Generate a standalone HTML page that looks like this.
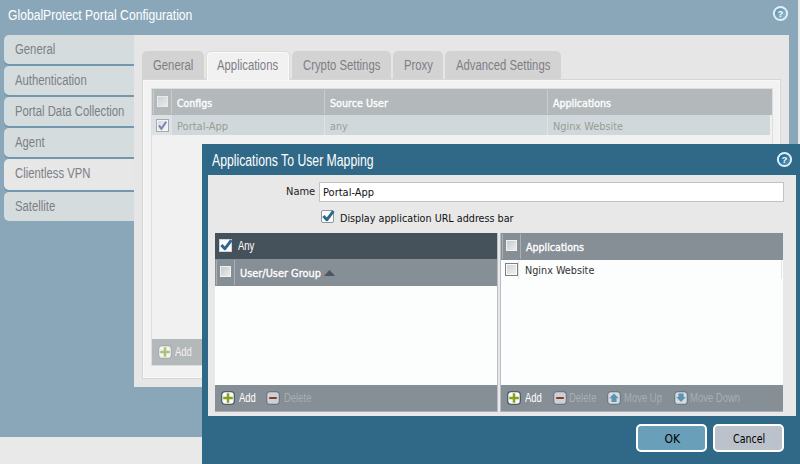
<!DOCTYPE html>
<html>
<head>
<meta charset="utf-8">
<title>GlobalProtect Portal Configuration</title>
<style>
html,body{margin:0;padding:0;}
body{width:800px;height:464px;overflow:hidden;background:#e9e9e9;position:relative;font-family:"Liberation Sans",sans-serif;}
.abs{position:absolute;}
.cn{position:absolute;white-space:nowrap;font-family:"Liberation Sans",sans-serif;font-size:14px;line-height:16px;transform:scaleX(.808);transform-origin:0 50%;}
.th{position:absolute;white-space:nowrap;font-family:"DejaVu Sans Condensed","DejaVu Sans","Liberation Sans",sans-serif;font-size:11px;line-height:14px;transform-origin:0 50%;}
#back{left:0;top:0;width:798px;height:437px;background:#8aa7ba;}
.stab{position:absolute;left:4px;width:130px;height:29px;background:#d5dcdd;border-radius:5px 0 0 5px;box-shadow:0 2px 0 #7397af;}
.stab .cn{left:11px;top:6px;color:#7c8085;}
.stab.act{background:#e7e7e7;height:31px;}
#main{left:134px;top:35px;width:655px;height:352px;background:#e6e6e6;}
.itab{position:absolute;top:51px;height:28px;background:#d3d3d3;border-radius:5px 5px 0 0;}
.itab .cn{left:11px;top:6px;color:#7c8085;}
.itab.act{background:#f1f1f1;border:1px solid #dcdcdc;border-bottom:none;height:29px;top:51px;box-sizing:border-box;box-shadow:inset 1px 1px 0 #fafafa,inset -1px 0 0 #fafafa;}
#ipanel{left:142px;top:79px;width:639px;height:300px;background:#f2f2f2;border:1px solid #d6d6d6;box-shadow:inset 0 0 0 1px #f8f8f8;box-sizing:border-box;}
#dlg{left:202px;top:144px;width:600px;height:330px;background:#306887;}
#dlgc{left:208px;top:175px;width:588px;height:241px;background:#e8e8e8;}
.cb{position:absolute;box-sizing:border-box;background:linear-gradient(135deg,#d8dadb 0%,#f4f4f4 100%);border:1px solid #8e9499;}
.btn{position:absolute;box-sizing:border-box;height:28px;width:71px;border:2px solid #fff;border-radius:5px;}
</style>
</head>
<body>
<div id="back" class="abs"></div>
<div class="cn" style="left:8px;top:7px;color:#fff;font-size:15px;transform:scale(.81,1.03)">GlobalProtect Portal Configuration</div>

<!-- help icon (back) -->
<svg class="abs" style="left:772px;top:5px" width="17" height="17" viewBox="0 0 17 17">
  <defs><linearGradient id="hg1" x1="0" y1="0" x2="1" y2="1"><stop offset="0" stop-color="#4f8bab"/><stop offset="1" stop-color="#9cc0d2"/></linearGradient></defs>
  <circle cx="8.5" cy="8.5" r="6.6" fill="url(#hg1)" stroke="#e6eef3" stroke-width="2"/>
  <text x="8.5" y="11.9" text-anchor="middle" font-family="Liberation Sans, sans-serif" font-weight="bold" font-size="9.5" fill="#fff">?</text>
</svg>

<!-- side tabs -->
<div class="stab" style="top:35px"><div class="cn">General</div></div>
<div class="stab" style="top:66px"><div class="cn">Authentication</div></div>
<div class="stab" style="top:97px"><div class="cn">Portal Data Collection</div></div>
<div class="stab" style="top:128px"><div class="cn">Agent</div></div>
<div class="stab act" style="top:159px"><div class="cn">Clientless VPN</div></div>
<div class="stab" style="top:192px;box-shadow:none"><div class="cn">Satellite</div></div>

<div id="main" class="abs"></div>

<!-- inner tabs -->
<div class="itab" style="left:142px;width:62px"><div class="cn">General</div></div>
<div class="itab" style="left:292px;width:99px"><div class="cn" style="left:10.5px">Crypto Settings</div></div>
<div class="itab" style="left:393px;width:50px"><div class="cn" style="left:10.7px">Proxy</div></div>
<div class="itab" style="left:445px;width:116px"><div class="cn" style="left:10.7px;transform:scaleX(.808)">Advanced Settings</div></div>
<div id="ipanel" class="abs"></div>
<div class="itab act" style="left:206px;width:84px"><div class="cn" style="top:5px;left:10px;transform:scaleX(.81)">Applications</div></div>

<!-- back grid -->
<div class="abs" style="left:151px;top:88px;width:622px;height:278px;box-sizing:border-box;border:1px solid #dcdee0;background:#f1f1f1"></div>
<div class="abs" style="left:152px;top:89px;width:620px;height:26px;background:#b3b9bb;"></div>
<div class="abs" style="left:152px;top:115px;width:618px;height:20px;background:#d0d8db;"></div>
<div class="abs" style="left:152px;top:135px;width:620px;height:230px;background:#f1f1f1;"></div>
<div class="abs" style="left:152px;top:339px;width:60px;height:26px;background:#b3b9bb;"></div>
<div class="abs" style="left:153px;top:90px;width:1px;height:24px;background:#c9cdce;"></div>
<div class="abs" style="left:171px;top:90px;width:1px;height:24px;background:#c9cdce;"></div>
<div class="abs" style="left:324px;top:90px;width:1px;height:24px;background:#c9cdce;"></div>
<div class="abs" style="left:547px;top:90px;width:1px;height:24px;background:#c9cdce;"></div>
<div class="abs" style="left:171px;top:115px;width:1px;height:20px;background:#dde3e5;"></div>
<div class="abs" style="left:324px;top:115px;width:1px;height:20px;background:#dde3e5;"></div>
<div class="abs" style="left:547px;top:115px;width:1px;height:20px;background:#dde3e5;"></div>
<div class="cb" style="left:157px;top:96px;width:11px;height:11px;border-color:#e9ebeb;background:linear-gradient(135deg,#cfd2d3,#e8e9e9)"></div>
<div class="th" style="left:177px;top:97px;color:#fff;-webkit-text-stroke:.35px #fff;transform:scaleX(.95)">Configs</div>
<div class="th" style="left:330px;top:97px;color:#fff;-webkit-text-stroke:.35px #fff;transform:scaleX(.97)">Source User</div>
<div class="th" style="left:553px;top:97px;color:#fff;-webkit-text-stroke:.35px #fff;transform:scaleX(.96)">Applications</div>
<div class="abs" style="left:152px;top:115px;width:19px;height:20px;background:#dce2e4;"></div>
<div class="cb" style="left:156px;top:119px;width:13px;height:13px;border-color:#a3a9ad;background:linear-gradient(135deg,#d4d8e0,#f6f7f8);box-shadow:inset 0 0 0 1px #f3f5f6"></div>
<svg class="abs" style="left:156px;top:119px" width="13" height="13" viewBox="0 0 13 13"><path d="M3 6.4 L5.4 9.8 L10.2 2.8" fill="none" stroke="#7a83b4" stroke-width="2"/></svg>
<div class="th" style="left:177px;top:120px;color:#999d93;">Portal-App</div>
<div class="th" style="left:330px;top:120px;color:#999d93;transform:scaleX(.97)">any</div>
<div class="th" style="left:553px;top:120px;color:#999d93;transform:scaleX(.985)">Nginx Website</div>
<!-- back add -->
<svg class="abs" style="left:158px;top:345px" width="14" height="14" viewBox="0 0 14 14"><rect x="0.65" y="0.65" width="12.7" height="12.7" rx="3.4" fill="#f3f4f1" stroke="#a4acb0" stroke-width="1.2"/><path d="M7 2.2V11.8M2.2 7H11.8" stroke="#adc275" stroke-width="2.5"/></svg>
<div class="cn" style="left:175px;top:344px;color:#eef0f0;font-size:12px;transform:scaleX(.79)">Add</div>

<!-- front dialog -->
<div id="dlg" class="abs"></div>
<div class="cn" style="left:212px;top:153px;color:#fff;font-size:15px;transform:scale(.815,1.04)">Applications To User Mapping</div>
<svg class="abs" style="left:776px;top:151px" width="17" height="17" viewBox="0 0 17 17">
  <defs><linearGradient id="hg2" x1="0" y1="0" x2="1" y2="1"><stop offset="0" stop-color="#0d5c8c"/><stop offset="1" stop-color="#5b9bc0"/></linearGradient></defs>
  <circle cx="8.5" cy="8.5" r="6.6" fill="url(#hg2)" stroke="#e3edf3" stroke-width="2"/>
  <text x="8.5" y="11.9" text-anchor="middle" font-family="Liberation Sans, sans-serif" font-weight="bold" font-size="9.5" fill="#fff">?</text>
</svg>
<div id="dlgc" class="abs"></div>
<div class="th" style="left:286px;top:185px;color:#222;">Name</div>
<div class="abs" style="left:319px;top:181.5px;width:465px;height:20px;box-sizing:border-box;background:#fff;border:1px solid #c3c3c3;"></div>
<div class="th" style="left:323px;top:186px;color:#111;">Portal-App</div>
<div class="cb" style="left:320.5px;top:209.5px;width:13.5px;height:13px;background:#fff;border-color:#8f979d;border-radius:2px"></div>
<svg class="abs" style="left:320.5px;top:208px" width="15" height="15" viewBox="0 0 15 15"><path d="M2.4 8 L5.8 11.8 L12.4 3.2" fill="none" stroke="#2c6a8c" stroke-width="2.9" stroke-linejoin="round"/></svg>
<div class="th" style="left:339.5px;top:212px;color:#111;transform:scaleX(.972)">Display application URL address bar</div>

<!-- left grid -->
<div class="abs" style="left:215px;top:233px;width:282px;height:26px;background:#45525c;"></div>
<div class="abs" style="left:215px;top:259px;width:282px;height:27px;background:#868e96;"></div>
<div class="abs" style="left:215px;top:286px;width:282px;height:99px;background:#fcfdfd;"></div>
<div class="abs" style="left:215px;top:385px;width:282px;height:26px;background:#868e96;border-bottom:1px solid #a9aeb4"></div>
<div class="abs" style="left:216px;top:260px;width:1px;height:25px;background:#a9afb5;"></div>
<div class="abs" style="left:234px;top:260px;width:1px;height:25px;background:#a9afb5;"></div>
<div class="cb" style="left:219px;top:239px;width:13px;height:13px;background:#fff;border-color:#cfd4d8"></div>
<svg class="abs" style="left:219px;top:237px" width="15" height="15" viewBox="0 0 15 15"><path d="M2.4 8 L5.8 11.8 L12.4 3.2" fill="none" stroke="#2c6a8c" stroke-width="2.9" stroke-linejoin="round"/></svg>
<div class="cn" style="left:238px;top:238px;color:#fff;font-size:12px;transform:scaleX(.79)">Any</div>
<div class="cb" style="left:220px;top:266px;width:11px;height:11px;border-color:#f0f1f2;background:linear-gradient(135deg,#c6cace,#ececec)"></div>
<div class="th" style="left:240px;top:267px;color:#fff;-webkit-text-stroke:.35px #fff;transform:scaleX(.99)">User/User Group</div>
<svg class="abs" style="left:324px;top:270px" width="11" height="6" viewBox="0 0 11 6"><path d="M0 6 L5.5 0 L11 6Z" fill="#4a5660"/></svg>
<!-- left toolbar -->
<svg class="abs" style="left:221px;top:391px" width="14" height="14" viewBox="0 0 14 14"><rect x="0.65" y="0.65" width="12.7" height="12.7" rx="3.4" fill="#fdfdfb" stroke="#4f5f6a" stroke-width="1.3"/><path d="M7 2.2V11.8M2.2 7H11.8" stroke="#86a11f" stroke-width="2.5"/></svg>
<div class="cn" style="left:239px;top:390px;color:#fff;font-size:12px;transform:scaleX(.79)">Add</div>
<svg class="abs" style="left:266px;top:391px" width="14" height="14" viewBox="0 0 14 14"><rect x="0.65" y="0.65" width="12.7" height="12.7" rx="3.4" fill="#cdd1d5" stroke="#6c7780" stroke-width="1.2"/><path d="M3.2 7H10.8" stroke="#8b3d2b" stroke-width="2"/></svg>
<div class="cn" style="left:283.5px;top:390px;color:#a8aeb4;font-size:12px;transform:scaleX(.79)">Delete</div>

<!-- splitter -->
<div class="abs" style="left:497px;top:233px;width:1px;height:179px;background:#b9bdc3;"></div>
<div class="abs" style="left:500px;top:233px;width:1px;height:179px;background:#b9bdc3;"></div>

<!-- right grid -->
<div class="abs" style="left:501px;top:233px;width:282px;height:27px;background:#868e96;"></div>
<div class="abs" style="left:501px;top:260px;width:282px;height:125px;background:#fcfdfd;"></div>
<div class="abs" style="left:501px;top:385px;width:282px;height:26px;background:#868e96;border-bottom:1px solid #a9aeb4"></div>
<div class="abs" style="left:502px;top:234px;width:1px;height:25px;background:#a9afb5;"></div>
<div class="abs" style="left:520px;top:234px;width:1px;height:25px;background:#a9afb5;"></div>
<div class="abs" style="left:518px;top:260px;width:1px;height:19px;background:#e3e6e8;"></div>
<div class="abs" style="left:781px;top:260px;width:1px;height:19px;background:#e3e6e8;"></div>
<div class="cb" style="left:506px;top:240px;width:11px;height:11px;border-color:#f0f1f2;background:linear-gradient(135deg,#c6cace,#ececec)"></div>
<div class="th" style="left:526px;top:241px;color:#fff;-webkit-text-stroke:.35px #fff;transform:scaleX(.96)">Applications</div>
<div class="cb" style="left:505px;top:263px;width:13px;height:13px;border-color:#7d8084;background:linear-gradient(135deg,#cfd1d3,#f4f4f4);box-shadow:inset 0 0 0 1px #fbfbfb"></div>
<div class="th" style="left:525px;top:264px;color:#333;transform:scaleX(.975)">Nginx Website</div>
<!-- right toolbar -->
<svg class="abs" style="left:506.5px;top:391px" width="14" height="14" viewBox="0 0 14 14"><rect x="0.65" y="0.65" width="12.7" height="12.7" rx="3.4" fill="#fdfdfb" stroke="#4f5f6a" stroke-width="1.3"/><path d="M7 2.2V11.8M2.2 7H11.8" stroke="#86a11f" stroke-width="2.5"/></svg>
<div class="cn" style="left:525px;top:390px;color:#fff;font-size:12px;transform:scaleX(.79)">Add</div>
<svg class="abs" style="left:552.5px;top:391px" width="14" height="14" viewBox="0 0 14 14"><rect x="0.65" y="0.65" width="12.7" height="12.7" rx="3.4" fill="#cdd1d5" stroke="#6c7780" stroke-width="1.2"/><path d="M3.2 7H10.8" stroke="#8b3d2b" stroke-width="2"/></svg>
<div class="cn" style="left:569px;top:390px;color:#a8aeb4;font-size:12px;transform:scaleX(.79)">Delete</div>
<svg class="abs" style="left:607.25px;top:391px" width="14" height="14" viewBox="0 0 14 14"><rect x="0.65" y="0.65" width="12.7" height="12.7" rx="3.4" fill="#d5dbe0" stroke="#6c7a85" stroke-width="1.2"/><path d="M7 2.5L11.7 7.2H9.5V11H4.5V7.2H2.3Z" fill="#5b93b0"/></svg>
<div class="cn" style="left:624px;top:390px;color:#a8aeb4;font-size:12px;transform:scaleX(.79)">Move Up</div>
<svg class="abs" style="left:673.5px;top:391px" width="14" height="14" viewBox="0 0 14 14"><rect x="0.65" y="0.65" width="12.7" height="12.7" rx="3.4" fill="#d5dbe0" stroke="#6c7a85" stroke-width="1.2"/><path d="M7 11L11.9 6H9.6V2.5H4.4V6H2.1Z" fill="#5b93b0"/></svg>
<div class="cn" style="left:690px;top:390px;color:#a8aeb4;font-size:12px;transform:scaleX(.79)">Move Down</div>

<!-- buttons -->
<div class="btn" style="left:636px;top:424px;background:#6a9fb9;"></div>
<div class="th" style="left:664.5px;top:432px;color:#000;font-size:12px;">OK</div>
<div class="btn" style="left:713px;top:424px;background:#bcc2cb;"></div>
<div class="th" style="left:732.5px;top:432px;color:#000;font-size:12px;transform:scaleX(.88)">Cancel</div>
</body>
</html>
